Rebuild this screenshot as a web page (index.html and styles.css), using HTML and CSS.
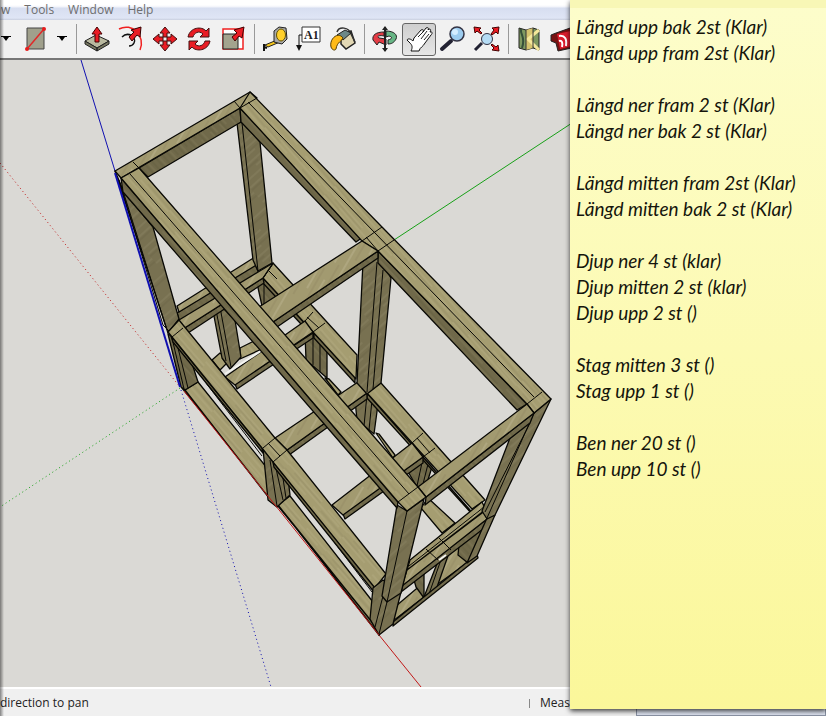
FILE: index.html
```html
<!DOCTYPE html>
<html lang="sv">
<head>
<meta charset="utf-8">
<meta name="viewport" content="width=device-width, initial-scale=1">
<title>Bench frame</title>
<link rel="stylesheet" href="styles.css">
</head>
<body>
<div class="app">
  <nav class="menu">
    <a href="#view">w</a><a href="#tools">Tools</a><a href="#window">Window</a><a href="#help">Help</a>
  </nav>
  <div class="toolbar">
    <button class="arrow" aria-label="Line options"><svg viewBox="0 0 10 6"><path d="M0 0h10v1H8L5 5 2 1H0z"/></svg></button>
    <button class="tool split" aria-label="Rectangle"><svg viewBox="0 0 28 28"><path d="M6 3h17v21H6z" fill="#a0a08c" stroke="#444"/><path d="M6 24 23 4" stroke="#e02828" stroke-width="1.5"/><circle cx="6" cy="24" r="2" fill="#e81c1c"/><circle cx="23" cy="4" r="2" fill="#e81c1c"/></svg></button>
    <button class="arrow" aria-label="Rectangle options"><svg viewBox="0 0 10 6"><path d="M0 0h10v1H8L5 5 2 1H0z"/></svg></button>
    <i class="sep"></i>
    <button class="tool" aria-label="Push/Pull"><svg viewBox="0 0 28 28"><path d="M2 16 13 10l13 6-12 7z" fill="#b9b99f" stroke="#222"/><path d="M2 16v3l12 7v-3zM14 23v3l12-7v-3z" fill="#77775f" stroke="#222"/><path d="M12 17V9H9l5-7 5 7h-3v8z" fill="#e91c24" stroke="#400"/></svg></button>
    <button class="tool" aria-label="Offset"><svg viewBox="0 0 28 28"><path d="M2 4C15-3 29 11 23 25" stroke="#f02020" stroke-width="1.5"/><path d="M5 12c6-6 15 0 12 6-1 2-3 3-5 3" stroke="#111" stroke-width="1.5"/><path d="m12 12 5-5-3-2 10-3-1 10-3-2-5 6z" fill="#e91c24" stroke="#300"/></svg></button>
    <button class="tool" aria-label="Move"><svg viewBox="0 0 28 28"><path class="red-icon" d="m14 2 5 6h-3v4h-4V8H9zM14 26l5-6h-3v-4h-4v4H9zM2 14l6-5v3h4v4H8v3zM26 14l-6-5v3h-4v4h4v3z"/></svg></button>
    <button class="tool" aria-label="Rotate"><svg viewBox="0 0 28 28"><path class="red-icon" d="M3 12C5 2 17 1 21 6l3-3v9h-9l3-3c-4-4-9-1-10 3z"/><path class="red-icon" d="M25 16c-2 10-14 11-18 6l-3 3v-9h9l-3 3c4 4 9 1 10-3z"/></svg></button>
    <button class="tool" aria-label="Scale"><svg viewBox="0 0 28 28"><path d="M4 4h20v20H4z" fill="#fff" stroke="#f02020" stroke-width="1.5"/><path d="M4 9h15v15H4z" fill="#a3a38e" stroke="#222"/><path d="m13 12 5-4-3-3 10-3-2 11-3-2-4 5z" fill="#e91c24" stroke="#400"/></svg></button>
    <i class="sep"></i>
    <button class="tool" aria-label="Tape Measure"><svg viewBox="0 0 28 28"><path d="m4 20 12-5 3 2-12 5z" fill="#f4c51c" stroke="#222"/><path d="M3 19v7M3 22l3 1" stroke="#111" stroke-width="2"/><path d="M13 6l5-4 7 1 1 11-5 5-8-2z" fill="#aaa" stroke="#222"/><ellipse cx="20" cy="10" rx="4.5" ry="6" fill="#ffd02c" stroke="#665500"/></svg></button>
    <button class="tool" aria-label="Text"><svg viewBox="0 0 28 28"><path d="M7 2h18v15H7z" fill="#fff" stroke="#333"/><path d="M7 10H4v12" stroke="#111"/><path d="m1 20 3 6 3-6z" fill="#111"/><text x="9" y="14" class="tool-text">A1</text></svg></button>
    <button class="tool" aria-label="Paint Bucket"><svg viewBox="0 0 28 28"><path d="m12 10 10-4 4 12-9 6-5-5z" fill="#e2d8b5" stroke="#222" stroke-width="1.5"/><path d="M8 7c2-6 12-5 14 2l4 8" stroke="#333" stroke-width="1.5"/><path d="m8 10 8-5 6 3-8 7z" fill="#6d8888" stroke="#222"/><path d="M2 22c-2-8 7-16 12-9-1 3-6 4-7 11-1 2-4 1-5-2z" fill="#ffba18" stroke="#553c00"/></svg></button>
    <i class="sep"></i>
    <button class="tool" aria-label="Orbit"><svg viewBox="0 0 28 28"><path d="M13 7c-8 0-12 3-11 8l4 5 2-3 7 3v-6l-7-1c-3-2 1-3 5-2z" fill="#e33c45" stroke="#222"/><path d="M15 6c8 0 12 4 10 8s-5 5-8 5v-4c4-1 5-3 1-4l-3 1z" fill="#68b686" stroke="#222"/><path d="M14 2v24" stroke="#222" stroke-width="2"/><path d="m11 5 3-4 3 4zM11 23l3 4 3-4z" fill="#222"/></svg></button>
    <button class="tool active" aria-label="Pan" aria-pressed="true"><svg viewBox="0 0 28 28"><path d="M6 26c2-4 1-6-1-8l-3-3c1-2 4-1 6 1l1-3 7-8c2-1 3 0 2 2l3-4c2-1 3 0 2 2l1-1c2 0 2 1 1 3l1 0c2 0 1 2 0 3l-6 8c-2 4-5 4-6 8z" fill="#fff" stroke="#111"/><path d="m13 12 5-5m-2 7 6-8m-3 9 5-6" stroke="#222"/></svg></button>
    <button class="tool" aria-label="Zoom"><svg viewBox="0 0 28 28"><path d="m12 16-9 8" stroke="#223" stroke-width="4" stroke-linecap="round"/><circle cx="18" cy="9" r="7" fill="#9dccef" stroke="#334" stroke-width="1.5"/><circle cx="16" cy="7" r="3" fill="#d4edff"/></svg></button>
    <button class="tool" aria-label="Zoom Extents"><svg viewBox="0 0 28 28"><path d="m9 18-7 7" stroke="#223" stroke-width="3"/><circle cx="14" cy="14" r="5.5" fill="#b5dcf5" stroke="#334"/><path d="m1 2 7 1-2 2 3 3-1 1-4-3-2 2zM26 2l-1 7-2-2-4 3-1-1 3-4-2-2zM26 26l-7-1 2-2-3-3 1-1 4 3 2-2z" fill="#e91c24" stroke="#400"/></svg></button>
    <i class="sep"></i>
    <button class="tool" aria-label="Add Location"><svg viewBox="0 0 28 28"><path d="m4 3 7 2 7-2 6 2v20l-6-2-7 2-7-2z" fill="#7e9860" stroke="#222"/><path d="m11 5 7-2v20l-7 2z" fill="#d5c36f"/><path d="M24 5 13 14l11 11" stroke="#f5e79b" stroke-width="3"/><path d="M11 5v20M18 3v20" stroke="#333"/><path d="M6 4c-1 6 5 8 1 19" stroke="#354f3a" stroke-width="2"/></svg></button>
    <button class="tool" aria-label="3D Warehouse"><svg viewBox="0 0 28 28"><path d="m2 10 5-2 17-6 3 5v15l-18 4-2-8-5-2z" fill="#711" stroke="#222"/><path d="m8 9 18-4v15l-15 4z" fill="#d91c2c"/><path d="M10 11c6-1 8 3 7 10M10 16c3-1 4 2 3 6" stroke="#fff" stroke-width="2"/></svg></button>
  </div>

  <main class="viewport">
    <svg class="scene" viewBox="0 60 826 627" preserveAspectRatio="xMinYMin slice" role="img" aria-label="Wooden frame model">
      <defs>
        <pattern id="long" width="90" height="14" patternUnits="userSpaceOnUse" patternTransform="rotate(49)"><path d="M0 0h90v14H0z" fill="#a59d71"/><path d="M0 2h50M20 6h60M60 3h30M0 10h34M48 12h42" stroke="#aba378" stroke-width="2"/><path d="M10 4h40M0 8h22M56 9h34" stroke="#9a9268"/></pattern>
        <pattern id="short" width="37" height="60" patternUnits="userSpaceOnUse" patternTransform="rotate(30)"><path d="M0 0h37v60H0z" fill="#a29a70"/><path d="M3 0v36M14 20v40M25 0v60" stroke="#aea67f" stroke-width="2"/><path d="M8 10v50M19 0v35M31 8v40" stroke="#968d65"/></pattern>
        <pattern id="side" width="70" height="12" patternUnits="userSpaceOnUse" patternTransform="rotate(47)"><path d="M0 0h70v12H0z" fill="#70694a"/><path d="M0 3h35M30 8h40" stroke="#777050" stroke-width="2"/><path d="M10 6h50M0 11h25" stroke="#666042"/></pattern>
        <pattern id="post" width="60" height="19" patternUnits="userSpaceOnUse" patternTransform="rotate(-42)"><path d="M0 0h60v19H0z" fill="#787151"/><path d="M0 3h40M20 9h40M0 15h30" stroke="#807959" stroke-width="2"/><path d="M0 6h25M25 13h35" stroke="#6d6648"/></pattern>
      </defs>
      <g class="axis">
        <path class="blue" d="M81 60 115 171"/><path class="blue dots" d="M181 390 271 687"/>
        <path class="red dots" d="M0 163 180 387"/><path class="red" d="M379 635 421 687"/>
        <path class="green dots" d="M180 388 0 507"/><path class="green" d="M394 240 826-44"/>
      </g>
      <g class="wood">
        <!-- rear legs and rear floor beam -->
        <path fill="url(#side)" d="M257 283 263 278 281 293 262 306zM305 334 313 332 327 347 327 378 306 360z"/>
        <path class="thin" d="M264 279v26M313 333v32M320 342v30"/>
        <path fill="url(#post)" d="M355 400 367 394 378 404 374 434 357 420z"/><path class="thin" d="M367 394 364 426M372 400 369 430"/>
        <path fill="url(#long)" d="M325 378 329 379 341 392 338 395zM376 433 379 434 395 455 393 458zM428 498 455 523 442 533 421 508z"/>
        <path fill="url(#side)" d="M407 470 423 458 432 467 427 483 417 487z"/><path class="thin" d="M423 458 417 486M428 464 423 484"/>
        <!-- rear left posts -->
        <path fill="url(#side)" d="M177 313 255 264 260 276 180 324z"/>
        <path fill="url(#short)" d="M177 306 255 257 258 264 179 312z"/>
        <path fill="url(#post)" d="M237 123 242 122 260 142 272 263 258 271 253 260z"/><path class="thin" d="M242 123 258 271"/>
        <!-- shelf frame, rear rail -->
        <path fill="url(#side)" d="M263 278 313 332 313 337 263 283zM314 333 355 377 355 383 314 338zM367 393 423 457 470 510 472 514 367 398z"/>
        <path fill="url(#long)" d="M273 263 357 355 356 379 313 332 263 278z"/>
        <path fill="url(#long)" d="M381 383 485 500 472 509 367 393z"/>
        <path class="thin" d="M268 270 277 279M305 321 313 312M313 332 325 323M307 317 319 328M412 443 423 433M423 457 435 448M417 438 430 453"/>
        <!-- interior leg, left -->
        <path fill="url(#long)" d="M212 360 220 353 230 360 220 370zM240 348 254 341 264 348 240 359z"/>
        <path fill="url(#post)" d="M213 311 220 305 235 320 241 357 230 369 222 358z"/><path class="thin" d="M216 310 226 361M220 307 231 367"/>
        <!-- shelf cross members -->
        <path fill="url(#side)" d="M183 329 263 278 264 283 188 333z"/><path fill="url(#short)" d="M179 320 273 263 263 278 183 329z"/>
        <path class="thin" d="M173 327 179 320M263 278 273 264"/>
        <path fill="url(#side)" d="M313 333 235 384 237 389 313 338z"/><path fill="url(#short)" d="M305 321 313 332 235 385 225 377z"/>
        <path class="gap" d="M225 374 261 351"/>
        <path fill="url(#side)" d="M367 393 287 450 289 455 367 399z"/><path fill="url(#short)" d="M358 382 367 393 287 450 275 438z"/>
        <path fill="url(#side)" d="M423 457 343 514 345 519 423 463z"/><path fill="url(#short)" d="M412 443 423 457 343 515 332 505z"/>
        <!-- centre rear post -->
        <path fill="url(#post)" d="M363 262 377 256 391 278 381 383 367 394 357 383z"/><path class="thin" d="M377 262 367 392M383 270 373 389"/>
        <!-- lower front rail -->
        <path fill="url(#side)" d="M182 388 278 505 379 635 371 620 273 500z"/>
        <path fill="url(#long)" d="M198 382 271 473 273 503 185 390zM290 496 373 602 372 622 278 505z"/>
        <path class="thin" d="M206 383 262 456M294 489 372 592"/>
        <!-- front left leg and post -->
        <path fill="url(#side)" d="M168 334 173 337 190 357 198 382 185 390 181 387z"/><path class="thin" d="M172 338 184 389M177 344 188 388"/>
        <path fill="url(#post)" d="M115 171 123 190 153 227 179 319 168 333z"/><path class="thin" d="M119 180 163 325 171 333M123 191 166 327"/>
        <!-- shelf front rail and centre leg -->
        <path fill="url(#post)" d="M263 449 273 461 288 478 290 495 277 507 268 500z"/><path class="thin" d="M270 460 277 506M275 464 283 500M282 472 286 498"/>
        <path fill="url(#side)" d="M171 336 262 448 263 453 173 342zM273 462 375 586 374 592 274 467z"/>
        <path fill="url(#long)" d="M168 332 179 320 275 438 287 450 386 574 375 588 273 462 262 448z"/>
        <path class="thin" d="M183 328 172 337M263 448 275 438M273 462 287 450M268 443 280 456"/>
        <!-- right end bay -->
        <path fill="url(#short)" d="M396 606 422 584 424 597 393 621zM441 560 461 544 467 563 438 584z"/>
        <path fill="url(#side)" d="M414 580 424 574 424 598 416 587zM459 545 488 519 468 563 458 555z"/>
        <path fill="url(#post)" d="M440 556 450 550 436 590 424 597z"/><path class="thin" d="M443 554 429 594"/>
        <path fill="url(#side)" d="M393 622 477 554 478 558 393 626z"/>
        <path fill="url(#side)" d="M403 584 487 519 487 526 401 592z"/>
        <path fill="url(#short)" d="M410 560 482 502 486 510 407 570zM407 570 485 510 487 519 402 586z"/>
        <path class="thin" d="M426 549 438 560M439 538 451 550M409 566 484 507"/><path class="gap" d="M439 560 446 555"/>
        <path fill="url(#post)" d="M487 518 495 515 477 556 467 563z"/>
        <path fill="url(#post)" d="M551 399 534 413 510 438 482 511 487 519 495 515z"/><path class="thin" d="M534 413 487 518M530 423 485 512"/>
        <!-- front right post -->
        <path fill="url(#post)" d="M373 588 383 580 401 592 393 624 379 635 370 619z"/><path class="thin" d="M387 602 379 634M383 596 375 627"/>
        <path fill="url(#post)" d="M397 505 407 511 424 499 401 593 387 602 382 596z"/><path class="thin" d="M407 511 387 602"/>
        <!-- top frame -->
        <path fill="url(#side)" d="M139 168 240 108 241 122 148 177z"/>
        <path fill="url(#short)" d="M115 171 250 92 257 98 240 108 121 178z"/>
        <path fill="url(#side)" d="M240 108 363 237 356 242 241 122zM378 251 527 404 517 410 378 263z"/>
        <path fill="url(#long)" d="M250 92 382 227 551 399 534 413 527 404 378 251 362 241 240 108z"/>
        <path fill="url(#side)" d="M378 251 273 322 277 327 378 258z"/>
        <path fill="url(#short)" d="M362 241 378 251 273 322 259 307z"/>
        <path class="thin" d="M248 102 534 397M234 101 240 108 257 98M362 241 382 227M378 251 394 240M366 237 378 251M527 404 542 392M527 404 534 413"/>
        <path fill="url(#side)" d="M426 497 534 413 530 423 425 505z"/>
        <path fill="url(#short)" d="M418 487 527 404 534 413 426 497z"/>
        <path fill="url(#side)" d="M121 178 398 502 397 508 123 192z"/>
        <path fill="url(#long)" d="M121 178 139 168 418 487 426 497 407 511 398 502z"/>
        <path class="thin" d="M133 162 139 168M130 174 409 494M398 502 418 487"/>
      </g>
      <g class="axis"><path class="blue thick" d="M115 173 180 387"/><path class="red" d="M184 391 379 635"/></g>
    </svg>
  </main>

  <footer class="status">
    <span class="hint">direction to pan</span>
    <div class="measure"><label for="vcb">Measurements</label><input id="vcb" type="text"></div>
  </footer>

  <aside class="note">
    <div class="note-bar"></div>
    <textarea aria-label="Note" spellcheck="false">Längd upp bak 2st (Klar)
Längd upp fram 2st (Klar)

Längd ner fram 2 st (Klar)
Längd ner bak 2 st (Klar)

Längd mitten fram 2st (Klar)
Längd mitten bak 2 st (Klar)

Djup ner 4 st (klar)
Djup mitten 2 st (klar)
Djup upp 2 st ()

Stag mitten 3 st ()
Stag upp 1 st ()

Ben ner 20 st ()
Ben upp 10 st ()</textarea>
  </aside>
</div>
</body>
</html>
```
FILE: styles.css
```css
* { box-sizing: border-box; }
body { margin: 0; font-family: "Open Sans", "Noto Sans", sans-serif; }
.app {
  position: relative;
  display: flex;
  flex-direction: column;
  height: 100vh;
  overflow: hidden;
}
.app::before {
  content: "";
  position: absolute;
  inset: 0 auto 0 0;
  width: 4px;
  background: linear-gradient(90deg, rgba(0,0,0,.45), transparent);
  z-index: 1;
}
.menu {
  display: flex;
  gap: 14px;
  height: 20px;
  padding-left: 1px;
  background: linear-gradient(#fff 0 5px, #f1f3fa 7px, #d7def0 8px, #dfe5f5 18px, #c9cfdf);
}
.menu a {
  color: #6e6e6e;
  font-size: 12px;
  line-height: 20px;
  text-decoration: none;
}
.toolbar {
  display: flex;
  align-items: center;
  height: 40px;
  flex: none;
  margin-left: -4px;
  background: #f1f1f1;
  border-bottom: 2px solid #777;
}
.toolbar button {
  display: flex;
  flex: none;
  align-items: center;
  justify-content: center;
  padding: 0;
  border: 0;
  background: none;
}
.toolbar .arrow { width: 20px; height: 32px; }
.arrow svg { width: 10px; height: 6px; }
.toolbar .tool { width: 34px; height: 33px; }
.tool svg { width: 28px; height: 28px; fill: none; }
.tool-text { font: bold 12px "Liberation Serif", serif; fill: #222; }
.red-icon { fill: #e91c24; stroke: #401010; }
.split { margin-left: 2px; }
.toolbar .active {
  border: 1px solid #666;
  border-radius: 3px;
  background: linear-gradient(#cfcfcf, #e6e6e6);
}
.sep {
  flex: none;
  width: 8px;
  height: 30px;
  background: linear-gradient(#999, #999) center / 1px 100% no-repeat;
}
.viewport { flex: 1; min-height: 0; background: #dad9d5; }
.scene { display: block; width: 100%; height: 100%; }
.axis path { fill: none; stroke-width: 1; }
.axis .blue { stroke: #1010b0; }
.axis .red { stroke: #c01818; }
.axis .green { stroke: #18a018; }
.axis .thick { stroke-width: 2; }
.axis .dots { stroke-dasharray: 1 3; }
.wood path { stroke: #080804; stroke-width: 1.3; stroke-linejoin: round; }
.wood .thin { fill: none; stroke-width: 1; }
.wood .gap { fill: none; stroke: #f4f4f0; stroke-width: 2; }
.status {
  display: flex;
  flex: none;
  height: 29px;
  align-items: center;
  justify-content: space-between;
  border-top: 2px solid #fff;
  background: #f0f0f0;
  color: #222;
  font-size: 12px;
}
.measure {
  display: flex;
  align-items: center;
  width: 297px;
  gap: 12px;
  padding-left: 11px;
  background: linear-gradient(#888, #888) left 9px / 1px 9px no-repeat;
}
.measure input {
  flex: 1;
  min-width: 0;
  height: 26px;
  border: 1px solid #8b93a5;
  background: #dde3f0;
}
.note {
  position: absolute;
  top: 0;
  right: 0;
  bottom: 7px;
  width: 256px;
  display: flex;
  flex-direction: column;
  background: linear-gradient(#fdfdcb, #fbf79a);
  box-shadow: 0 2px 5px rgba(0,0,0,.75);
  z-index: 2;
}
.note-bar { height: 8px; background: #f8f7b6; }
.note textarea {
  flex: 1;
  padding: 6px;
  border: 0;
  outline: 0;
  resize: none;
  overflow: hidden;
  background: none;
  color: #15150c;
  font: italic 19px/26px "Segoe Print", Lato, sans-serif;
}
```
